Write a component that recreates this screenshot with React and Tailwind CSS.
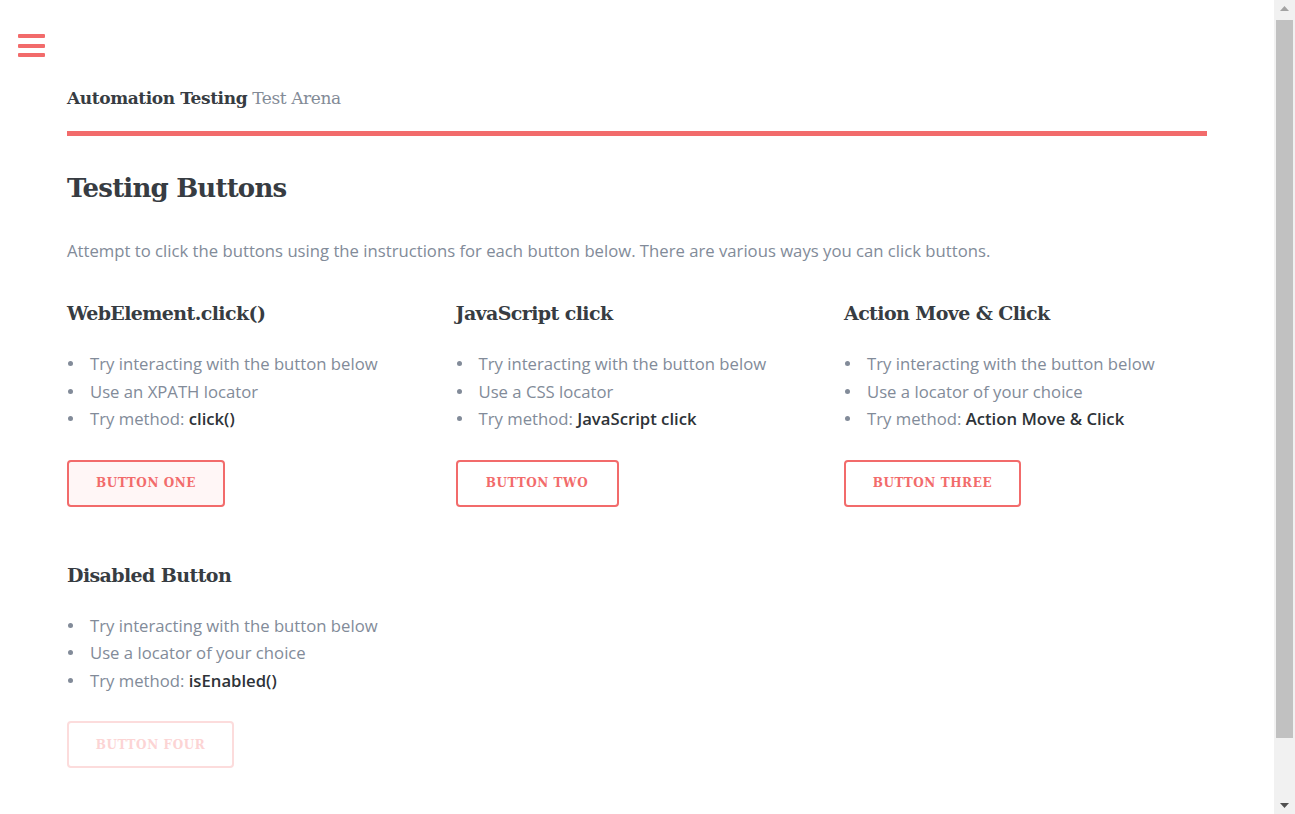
import React from 'react';

const slab = { fontFamily: '"DejaVu Serif", "Liberation Serif", serif' };

const columns = [
  {
    title: 'WebElement.click()',
    items: ['Try interacting with the button below', 'Use an XPATH locator'],
    method: 'click()',
    label: 'Button One',
    width: 'w-[158px]',
    focused: true,
  },
  {
    title: 'JavaScript click',
    items: ['Try interacting with the button below', 'Use a CSS locator'],
    method: 'JavaScript click',
    label: 'Button Two',
    width: 'w-[163px]',
  },
  {
    title: 'Action Move & Click',
    items: ['Try interacting with the button below', 'Use a locator of your choice'],
    method: 'Action Move & Click',
    label: 'Button Three',
    width: 'w-[177px]',
  },
];

const Block = ({ title, items, method, label, width, focused, disabled }) => {
  return (
    <div>
      <h3 className="text-[19px] font-bold text-[#373c42] leading-[26px] tracking-[-0.6px]" style={slab}>
        {title}
      </h3>
      <ul className="mt-[24px] text-[16.7px] leading-[27.5px] text-[#828b99]">
        {items.map((item) => (
          <li key={item} className="flex items-center">
            <span className="w-[5px] h-[5px] rounded-full bg-[#828b99] ml-[1px] mr-[17px]" />
            {item}
          </li>
        ))}
        <li className="flex items-center">
          <span className="w-[5px] h-[5px] rounded-full bg-[#828b99] ml-[1px] mr-[17px]" />
          Try method:&nbsp;<span className="font-semibold text-[#2e3338]">{method}</span>
        </li>
      </ul>
      <button
        disabled={disabled}
        className={`mt-[27px] h-[47px] ${width} rounded-[4px] border-2 uppercase text-[12px] font-bold tracking-[0.6px] ${
          disabled
            ? 'border-[#fcdcdc] text-[#fcd4d4] bg-white'
            : focused
            ? 'border-[#f26b6b] text-[#f26b6b] bg-[#fff6f6]'
            : 'border-[#f26b6b] text-[#f26b6b] bg-white'
        }`}
        style={slab}
      >
        {label}
      </button>
    </div>
  );
};

const Scrollbar = () => {
  return (
    <div className="w-[21px] h-full bg-[#f1f1f1] flex flex-col items-center">
      <div className="h-[17px] flex items-center justify-center">
        <svg width="9" height="5" viewBox="0 0 9 5">
          <path d="M0 5 L4.5 0 L9 5 Z" fill="#a3a3a3" />
        </svg>
      </div>
      <div className="mt-[3px] w-[17px] h-[718px] bg-[#c1c1c1]" />
      <div className="flex-1" />
      <div className="h-[17px] flex items-center justify-center">
        <svg width="9" height="5" viewBox="0 0 9 5">
          <path d="M0 0 L9 0 L4.5 5 Z" fill="#505050" />
        </svg>
      </div>
    </div>
  );
};

const App = () => {
  return (
    <div className="h-screen flex bg-white overflow-hidden" style={{ fontFamily: '"Open Sans", sans-serif' }}>
      <main className="flex-1 overflow-hidden">
        <div className="pl-[18px] pt-[34px]">
          <button className="flex flex-col gap-[5.5px] w-[27px]">
            <span className="h-[4px] w-[27px] rounded-[1px] bg-[#f26b6b]" />
            <span className="h-[4px] w-[27px] rounded-[1px] bg-[#f26b6b]" />
            <span className="h-[4px] w-[27px] rounded-[1px] bg-[#f26b6b]" />
          </button>
        </div>

        <div className="w-[1140px] mx-auto">
          <div className="mt-[28px] text-[17px] leading-[26px] tracking-[-0.4px]" style={slab}>
            <span className="font-bold text-[#373c42]">Automation Testing</span>{' '}
            <span className="text-[#838b97]">Test Arena</span>
          </div>
          <div className="mt-[20px] h-[5px] bg-[#f26b6b]" />

          <h1 className="mt-[35px] text-[26px] font-bold text-[#373c42] leading-[34px] tracking-[-0.8px]" style={slab}>
            Testing Buttons
          </h1>
          <p className="mt-[33px] text-[16.7px] leading-[26px] text-[#828b99]">
            Attempt to click the buttons using the instructions for each button below. There are various ways you can click buttons.
          </p>

          <div className="mt-[36px] grid grid-cols-[363px_363px_363px] gap-x-[25.5px] gap-y-[55px]">
            {columns.map((c) => (
              <Block key={c.label} {...c} />
            ))}
            <Block
              title="Disabled Button"
              items={['Try interacting with the button below', 'Use a locator of your choice']}
              method="isEnabled()"
              label="Button Four"
              width="w-[167px]"
              disabled
            />
          </div>
        </div>
      </main>
      <Scrollbar />
    </div>
  );
};

export default App;
